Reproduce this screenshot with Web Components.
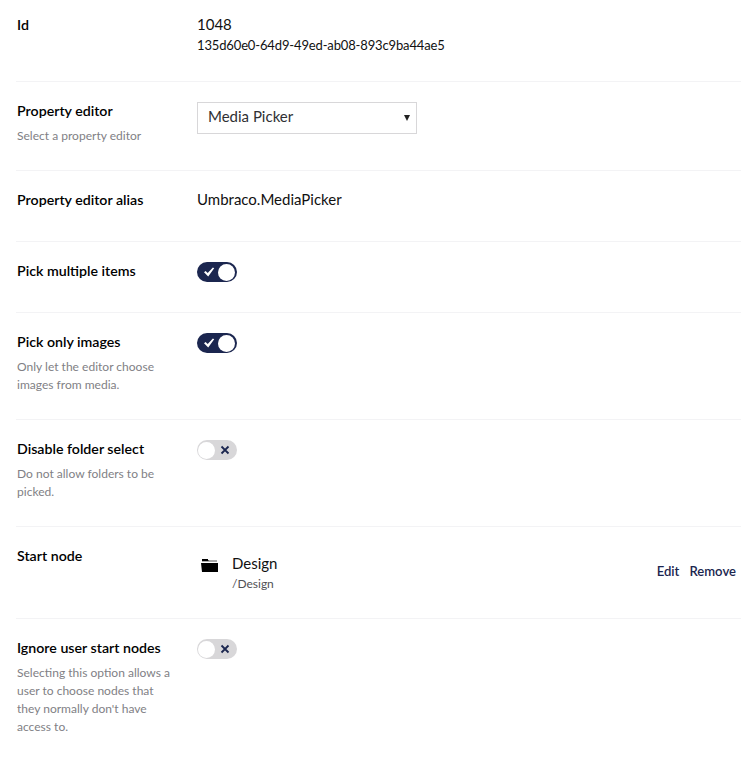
<!DOCTYPE html>
<html lang="en"><head><meta charset="utf-8"><title>Media Picker</title>
<style>body{margin:0;background:#fff;font-family:Lato,"Open Sans",sans-serif;color:#000}</style></head><body>
<settings-panel>
<property-row label="Id" style="height:81px;--top:15px"><text-value>1048<span slot="sub">135d60e0-64d9-49ed-ab08-893c9ba44ae5</span></text-value></property-row>
<property-row label="Property editor" description="Select a property editor" style="height:88px"><select-box>Media Picker</select-box></property-row>
<property-row label="Property editor alias" style="height:70px"><text-value>Umbraco.MediaPicker</text-value></property-row>
<property-row label="Pick multiple items" style="height:70px"><toggle-switch checked></toggle-switch></property-row>
<property-row label="Pick only images" description="Only let the editor choose images from media." style="height:106px"><toggle-switch checked></toggle-switch></property-row>
<property-row label="Disable folder select" description="Do not allow folders to be picked." style="height:106px"><toggle-switch></toggle-switch></property-row>
<property-row label="Start node" style="height:91px"><node-preview path="/Design">Design</node-preview></property-row>
<property-row label="Ignore user start nodes" description="Selecting this option allows a user to choose nodes that they normally don't have access to." style="height:139px;border-bottom:0"><toggle-switch></toggle-switch></property-row>
</settings-panel>
<script>
const define=(name,html,setup)=>customElements.define(name,class extends HTMLElement{
  connectedCallback(){
    if(this.shadowRoot)return;
    const root=this.attachShadow({mode:'open'});
    root.innerHTML=html;
    if(setup)setup(this,root);
  }
});
define('settings-panel','<style>:host{display:block;padding:0 14px 0 16px}</style><slot></slot>');
define('property-row',`<style>:host{display:flex;box-sizing:content-box;border-bottom:1px solid #f3f3f5}
.head{width:156px;padding:var(--top,19px) 0 0 1px;margin-right:24px;flex:none}
.label{font-size:14.2px;line-height:20px;font-weight:600;white-space:nowrap}
.desc{font-size:12.04px;line-height:18px;color:#817f85;margin-top:6px}
.body{flex:1;min-width:0;padding-top:calc(var(--top,19px) + 1px)}</style>
<div class="head"><div class="label"></div><div class="desc"></div></div><div class="body"><slot></slot></div>`,(el,r)=>{
 r.querySelector('.label').textContent=el.getAttribute('label');
 r.querySelector('.desc').textContent=el.getAttribute('description')||'';
});
define('text-value','<style>:host{display:block;font-size:15px;line-height:20px;margin-top:-2px;color:#111}::slotted(span){display:block;font-size:13px;line-height:20px;letter-spacing:-.14px;margin-top:1px}</style><slot></slot><slot name="sub"></slot>');
define('select-box',`<style>:host{display:flex;align-items:center;justify-content:space-between;box-sizing:border-box;width:220px;height:32px;border:1px solid #d8d7d9;padding:0 6px 3px 10px;font-size:15px;line-height:19px;color:#303033}
svg{display:block;margin-top:3px}</style><slot></slot><svg width="6" height="6"><path d="M0 0h6L3 6z" fill="#222"/></svg>`);
define('toggle-switch',`<style>:host{display:flex;align-items:center;box-sizing:border-box;width:40px;height:20px;border-radius:10px;background:#d8d7d9;padding:1.5px 2px 1.5px 1px}
:host([checked]){background:#1b264f;flex-direction:row-reverse}
i{width:17px;height:17px;border-radius:50%;background:#fff}
svg{margin:0 4px}:host([checked]) svg{margin-right:3px}.on{display:none}:host([checked]) .on{display:block}:host([checked]) .off{display:none}</style>
<i></i><svg class="on" width="12" height="12"><path d="M1 6.2 2.6 4.9 4.7 7.1 9.9 1.6 11.2 2.2 5.2 10.4z" fill="#fff"/></svg><svg class="off" width="12" height="12"><path d="M2.5 2.5 9.5 9.5M9.5 2.5 2.5 9.5" stroke="#1b264f" stroke-width="1.8"/></svg>`);
define('node-preview',`<style>:host{display:flex;align-items:flex-start}
.icon{margin:11px 14px 0 4px;display:block}.text{flex:1;font-size:15px;line-height:20px;padding-top:6px;color:#111}.path{font-size:12px;color:#515054;margin-top:1px}
.actions{display:flex;gap:10px;font-size:13.1px;line-height:20px;font-weight:600;color:#1b264f;padding:14px 5px 0 0}</style>
<svg class="icon" width="17" height="16"><path d="M1 2V1h6v1z"/><path d="M1 2h15v2H1z" fill="#aaa"/><path d="M1 2h6l1 1H1zM0 5h17v9H1z"/></svg>
<div class="text"><slot></slot><div class="path"></div></div><div class="actions"><span>Edit</span><span>Remove</span></div>`,(el,r)=>{r.querySelector('.path').textContent=el.getAttribute('path')});
</script></body></html>
